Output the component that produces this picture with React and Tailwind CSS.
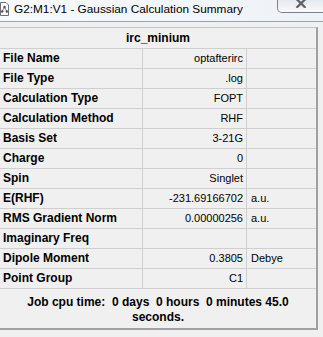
import React from "react";

const rows = [
  { label: "File Name", value: "optafterirc", unit: "" },
  { label: "File Type", value: ".log", unit: "" },
  { label: "Calculation Type", value: "FOPT", unit: "" },
  { label: "Calculation Method", value: "RHF", unit: "" },
  { label: "Basis Set", value: "3-21G", unit: "" },
  { label: "Charge", value: "0", unit: "" },
  { label: "Spin", value: "Singlet", unit: "" },
  { label: "E(RHF)", value: "-231.69166702", unit: "a.u." },
  { label: "RMS Gradient Norm", value: "0.00000256", unit: "a.u." },
  { label: "Imaginary Freq", value: "", unit: "" },
  { label: "Dipole Moment", value: "0.3805", unit: "Debye" },
  { label: "Point Group", value: "C1", unit: "" },
];

const AppIcon = () => (
  <svg width="9" height="14" viewBox="0 0 9 14" className="mt-[2px]">
    <path d="M0.5 0.5 H6 L8.5 3 V13.5 H0.5 Z" fill="#ffffff" stroke="#707070" />
    <circle cx="4.5" cy="5" r="1.2" fill="#505050" />
    <circle cx="2.2" cy="9.5" r="1.2" fill="#505050" />
    <circle cx="6.8" cy="9.5" r="1.2" fill="#505050" />
    <path d="M4.5 5 L2.2 9.5 M4.5 5 L6.8 9.5" stroke="#505050" strokeWidth="0.8" />
  </svg>
);

const App = () => {
  return (
    <div
      className="w-[323px] h-[337px] bg-[#f0f0f0] overflow-hidden"
      style={{ fontFamily: '"Liberation Sans", Arial, sans-serif' }}
    >
      {/* Title bar */}
      <div className="h-[22px] flex items-start bg-gradient-to-r from-[#f7f9fc] via-[#f3f6fa] to-[#eef1f7] border-b border-[#9ea3a8]">
        <div className="w-[14px]">
          <AppIcon />
        </div>
        <div className="text-[11.8px] text-black leading-[16px] pt-[1px] whitespace-nowrap">
          G2:M1:V1 - Gaussian Calculation Summary
        </div>
        <div className="flex-1" />
        <div className="w-[47px] h-[13px] mr-[-1px] border border-t-0 border-[#7d828a] rounded-bl-[5px] bg-gradient-to-b from-[#e6e9ee] to-[#f8f9fb] flex justify-center">
          <svg width="12" height="8" viewBox="0 0 12 8">
            <path d="M1.5 -1 L6 3.4 L10.5 -1 M1.5 7.8 L6 3.4 L10.5 7.8" stroke="#5f646c" strokeWidth="2.2" fill="none" />
          </svg>
        </div>
      </div>

      {/* Summary panel */}
      <div className="mt-[5px] w-[318px] border-t border-[#c4c4c4] border-r-2 border-b-2 border-r-[#a0a0a0] border-b-[#a0a0a0]">
        <div className="h-[20px] flex items-center justify-center text-[12px] font-bold text-black">
          irc_minium
        </div>
        {rows.map((row) => (
          <div key={row.label} className="h-[20px] flex border-t border-[#cfcfcf]">
            <div className="w-[142px] pl-[3px] text-[12px] font-bold text-black leading-[19px] whitespace-nowrap">
              {row.label}
            </div>
            <div className="w-[104px] border-l border-[#cfcfcf] pr-[3px] text-right text-[11px] text-black leading-[19px]">
              {row.value}
            </div>
            <div className="flex-1 border-l border-[#cfcfcf] pl-[4px] text-[11px] text-black leading-[19px]">
              {row.unit}
            </div>
          </div>
        ))}
        <div className="h-[40px] border-t border-[#cfcfcf] flex flex-col items-center pt-[6px] text-[12px] font-bold text-black leading-[15px]">
          <div className="whitespace-pre">Job cpu time:  0 days  0 hours  0 minutes 45.0</div>
          <div>seconds.</div>
        </div>
      </div>
    </div>
  );
};

export default App;
